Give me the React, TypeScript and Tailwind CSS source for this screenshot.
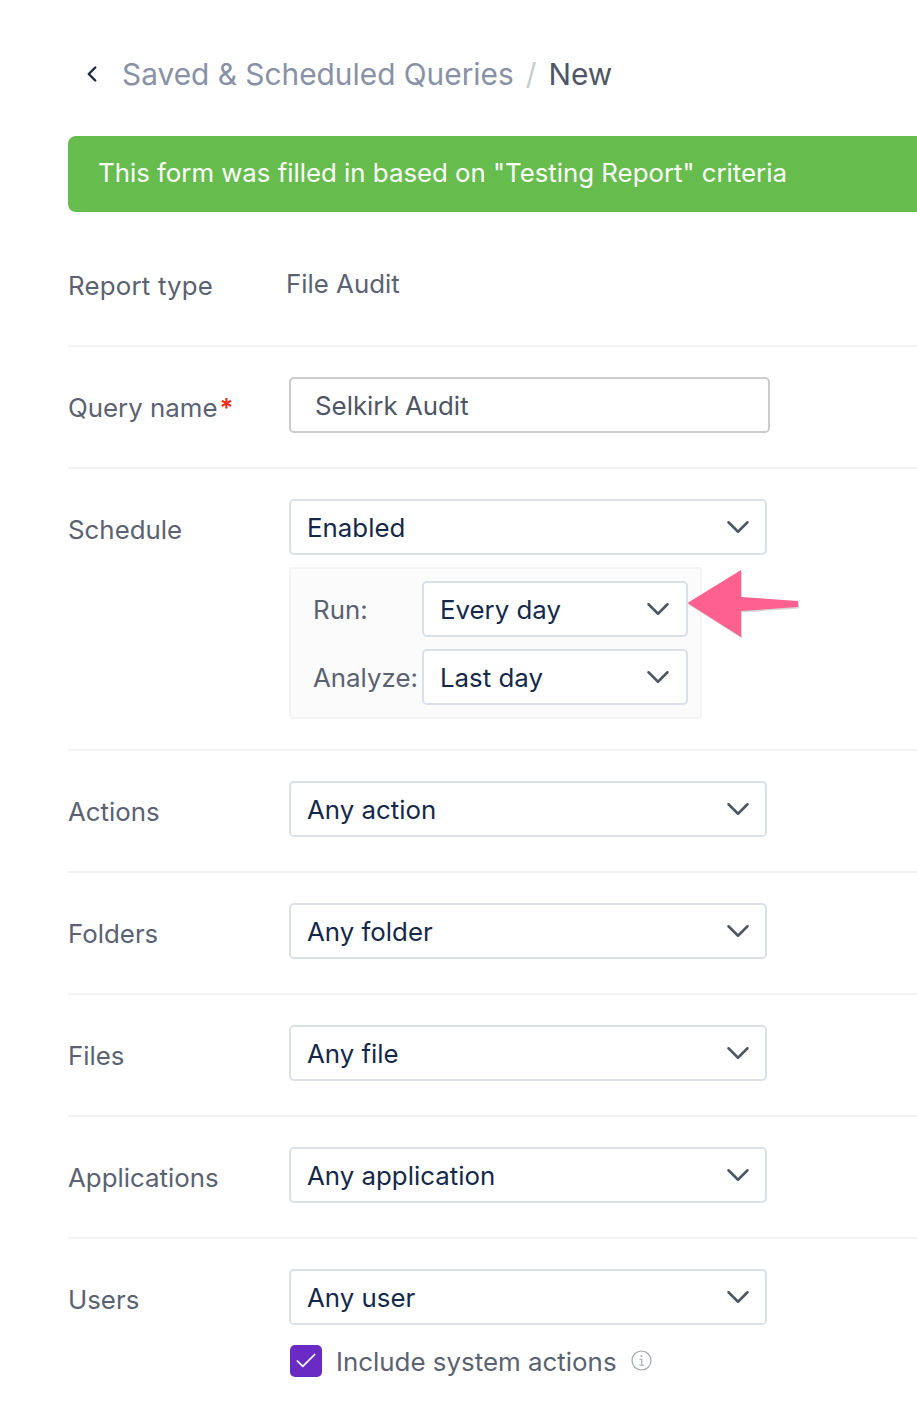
import { Check, ChevronDown, ChevronLeft } from 'lucide-react'

function Select({ value, small }: { value: string; small?: boolean }) {
  return (
    <div
      className={`flex h-[56px] shrink-0 items-center justify-between rounded-[5px] border-2 border-[#dbdfe8] bg-white pl-[16px] text-[25.85px] text-[#14294a] ${
        small ? 'w-[266px] pr-[9px]' : 'w-[478px] pr-[8px]'
      }`}
    >
      <span className="pt-[2px]">{value}</span>
      <ChevronDown size={38} strokeWidth={1.6} className="text-[#4e5564]" />
    </div>
  )
}

function Row({ label, required, children }: { label: string; required?: boolean; children: React.ReactNode }) {
  return (
    <div className="flex border-b-2 border-[#f1f2f4] pt-[30px] pb-[34px]">
      <div className="w-[221px] pt-[13px] text-[25.85px] leading-[36px] text-[#5a6272]">
        {label}
        {required && <span className="ml-[2px] font-semibold text-[#f02a13]">*</span>}
      </div>
      <div>{children}</div>
    </div>
  )
}

export default function App() {
  return (
    <div className="relative h-[1426px] w-[917px] overflow-hidden bg-white font-['Inter',sans-serif]">
      <div className="flex h-[136px] items-center pt-[12px] pl-[79px] text-[29.85px]">
        <ChevronLeft size={26} strokeWidth={2.25} className="text-[#1e2a3f]" />
        <span className="ml-[17px] text-[#8891a5]">Saved &amp; Scheduled Queries</span>
        <span className="mx-[12px] text-[#c9ccd3]">/</span>
        <span className="text-[#4e5564]">New</span>
      </div>

      <div className="ml-[68px] flex h-[76px] items-center rounded-l-[8px] bg-[#66bd4d] pb-[2px] pl-[30px] text-[25.8px] text-white">
        This form was filled in based on "Testing Report" criteria
      </div>

      <div className="ml-[68px]">
        <div className="flex h-[135px] border-b-2 border-[#f1f2f4] pt-[56px] text-[25.85px] leading-[36px] text-[#5a6272]">
          <div className="w-[218px] tracking-[0.2px]">Report type</div>
          <div className="-mt-[2px]">File Audit</div>
        </div>

        <Row label="Query name" required>
          <div className="flex h-[56px] w-[481px] items-center rounded-[5px] border-2 border-[#c9cbce] pt-[2px] pl-[24px] text-[25.85px] text-[#4e5564]">
            Selkirk Audit
          </div>
        </Row>

        <Row label="Schedule">
          <Select value="Enabled" />
          <div className="mt-[12px] -mb-[4px] flex w-[413px] flex-col gap-[12px] rounded-[3px] border-2 border-[#f3f4f6] bg-[#fbfbfc] pt-[12px] pr-[12px] pb-[12px] pl-[22px]">
            <div className="flex items-center">
              <span className="w-[109px] pt-[2px] text-[25.85px] text-[#5a6272]">Run:</span>
              <Select value="Every day" small />
            </div>
            <div className="flex items-center">
              <span className="w-[109px] pt-[2px] text-[25.85px] text-[#5a6272]">Analyze:</span>
              <Select value="Last day" small />
            </div>
          </div>
        </Row>

        <Row label="Actions">
          <Select value="Any action" />
        </Row>
        <Row label="Folders">
          <Select value="Any folder" />
        </Row>
        <Row label="Files">
          <Select value="Any file" />
        </Row>
        <Row label="Applications">
          <Select value="Any application" />
        </Row>

        <div className="flex pt-[30px]">
          <div className="w-[221px] pt-[13px] text-[25.85px] leading-[36px] text-[#5a6272]">Users</div>
          <div>
            <Select value="Any user" />
            <div className="mt-[20px] ml-[1px] flex items-start">
              <div className="flex h-[32px] w-[32px] items-center justify-center rounded-[5px] bg-[#6a2bc4]">
                <Check size={26} strokeWidth={1.6} className="text-white" />
              </div>
              <span className="ml-[14px] text-[25.9px] leading-[34px] text-[#5a6272]">Include system actions</span>
              <svg className="mt-[5px] ml-[14px] text-[#a4a8b0]" width="21" height="21" viewBox="0 0 21 21" fill="none" stroke="currentColor">
                <circle cx="10.5" cy="10.5" r="9.5" strokeWidth="1.2" />
                <circle cx="10.5" cy="6" r="1" fill="currentColor" stroke="none" />
                <path d="M8.5 9.2h2.3v6M8.3 15.2h4.6" strokeWidth="1.1" />
              </svg>
            </div>
          </div>
        </div>
      </div>

      <svg className="absolute left-[680px] top-[564px]" width="125" height="80" viewBox="680 564 125 80">
        <path d="M741 570 L741 597 L798 601 L798 607 L741 611 L741 637 L687.5 603 Z" fill="#8a8a8a" opacity="0.35" transform="translate(1 1.5)" />
        <path d="M687.5 603 L741 570 L741 597 L798 601 L798 607 L741 611 L741 637 Z" fill="#fe608f" />
      </svg>
    </div>
  )
}
